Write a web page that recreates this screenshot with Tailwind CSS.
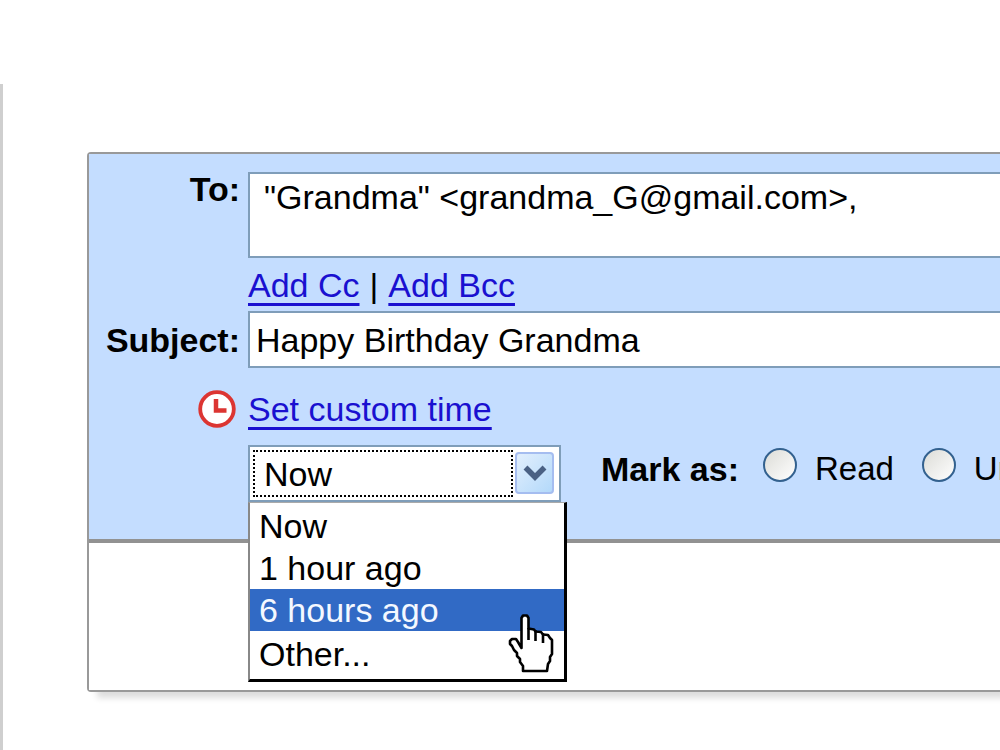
<!DOCTYPE html>
<html lang="en">
<head>
  <meta charset="UTF-8">
  <meta name="viewport" content="width=device-width, initial-scale=1.0">
  <title>Compose Mail</title>
  <script src="https://cdn.jsdelivr.net/npm/@tailwindcss/browser@4"></script>
</head>
<body class="flex min-h-screen bg-white pt-[84px] overflow-hidden font-['Liberation_Sans',Arial,sans-serif] text-[34px] leading-[42px] text-black">
  <main class="min-w-0 flex-1 border-l-3 border-[#cfcfcf] pt-[68px] pl-[84px]">
    <form class="rounded-l-sm border-2 border-r-0 border-[#999] shadow-[8px_8px_6px_-2px_#ddd]">

      <!-- Message headers -->
      <div class="grid grid-cols-[151px_minmax(0,1fr)] gap-x-2 bg-[#c4ddff] pt-[18px] pb-[37px] border-b-4 border-[#929292]">
        <label for="to" class="text-right font-bold -mt-1">To:</label>
        <textarea id="to" class="block h-[86px] w-full resize-none overflow-hidden border-2 border-r-0 border-[#7f9db9] bg-white px-3.5 pt-0.5 outline-none">"Grandma" &lt;grandma_G@gmail.com&gt;,</textarea>

        <div class="col-start-2 flex gap-2.5 pt-1.5 pb-[5px]">
          <a href="#" class="text-[#1a10d0] underline decoration-3 underline-offset-6">Add Cc</a>
          <span>|</span>
          <a href="#" class="text-[#1a10d0] underline decoration-3 underline-offset-6">Add Bcc</a>
        </div>

        <label for="subject" class="self-center text-right font-bold">Subject:</label>
        <input type="text" id="subject" value="Happy Birthday Grandma" class="h-[57px] w-full border-2 border-r-0 border-[#7f9db9] bg-white px-1.5 pt-0.5 outline-none">

        <div class="flex justify-end pt-5 pr-1">
          <svg class="mt-0.5 h-[38px] w-[38px]" viewBox="0 0 38 38" fill="none">
            <circle cx="19" cy="19" r="16.8" fill="#fff" stroke="#dc3532" stroke-width="3.8"/>
            <path d="M18 9v11.500h10.500" stroke="#dc3532" stroke-width="4.500"/>
          </svg>
        </div>
        <div class="pt-5 pb-[15px]">
          <a href="#" class="text-[#1a10d0] underline decoration-3 underline-offset-6">Set custom time</a>
        </div>

        <div class="col-start-2 flex items-center whitespace-nowrap">
          <!-- Time drop-down -->
          <div class="relative w-[313px] shrink-0">
            <select id="time" aria-label="Send time" class="block h-[57px] w-full appearance-none border-2 border-[#7f9db9] bg-white px-3.5 outline-none">
              <option>Now</option>
              <option>1 hour ago</option>
              <option>6 hours ago</option>
              <option>Other...</option>
            </select>
            <span class="pointer-events-none absolute top-[5px] bottom-[5px] left-[5px] right-12 border-2 border-dotted border-black"></span>
            <span class="pointer-events-none absolute top-[7px] right-[7px] flex h-[42px] w-[39px] items-center justify-center rounded-sm border-2 border-[#a5bdf0] bg-linear-to-br from-[#e2effd] to-[#b3d9fa]">
              <svg class="h-5 w-6" viewBox="0 0 24 20" fill="none" stroke="#4a6184" stroke-width="5.5">
                <path d="M2.500 4.500L12 14l9.500-9.500"/>
              </svg>
            </span>

            <!-- Open list -->
            <div class="absolute top-full left-0 w-[319px] border-t border-l-2 border-r-3 border-b-3 border-t-[#aaa] border-l-[#888] border-r-black border-b-black bg-white">
              <ul role="listbox" aria-label="Send time" class="pt-0.5 pb-1">
                <li role="option" class="px-[9px]">Now</li>
                <li role="option" class="px-[9px]">1 hour ago</li>
                <li role="option" aria-selected="true" class="bg-[#316ac5] px-[9px] text-[#f4f8ff]">6 hours ago</li>
                <li role="option" class="px-[9px] pt-0.5">Other...</li>
              </ul>
              <!-- Hand pointer -->
              <svg class="absolute top-[110px] left-[258px] h-[62px] w-[48px]" viewBox="8 12 48 62" stroke="#000" stroke-width="2.600" stroke-linejoin="round">
                <path fill="#fff" d="M21.500 47V17L23 14.500H27L28.500 17V27.500L34 28.500L35.500 30.500L41 31L43 33.500L48 34L50 37L52 39V53L50 56V60L48 63L47 70H23V65L20 61V58L17 55V52L14 49L12 45L10 43V40L12 38H16L18 41Z"/>
                <path fill="none" d="M28.500 27V39M35.500 29V40M43 32V42"/>
              </svg>
            </div>
          </div>

          <!-- Read state -->
          <div role="radiogroup" aria-labelledby="mark-label" class="ml-10 flex items-center pb-2.5">
            <span id="mark-label" class="mr-6 font-bold">Mark as:</span>
            <input type="radio" id="read" name="mark" class="mr-[18px] mb-2 h-[34px] w-[34px] shrink-0 appearance-none rounded-full border-2 border-[#33618f] bg-linear-to-br from-[#dcdcd7] to-white">
            <label for="read" class="mr-7 text-[33px]">Read</label>
            <input type="radio" id="unread" name="mark" class="mr-[18px] mb-2 h-[34px] w-[34px] shrink-0 appearance-none rounded-full border-2 border-[#33618f] bg-linear-to-br from-[#dcdcd7] to-white">
            <label for="unread" class="text-[33px]">Unread</label>
          </div>
        </div>
      </div>

      <!-- Message body -->
      <div class="h-[147px] bg-white"></div>
    </form>
  </main>
</body>
</html>
